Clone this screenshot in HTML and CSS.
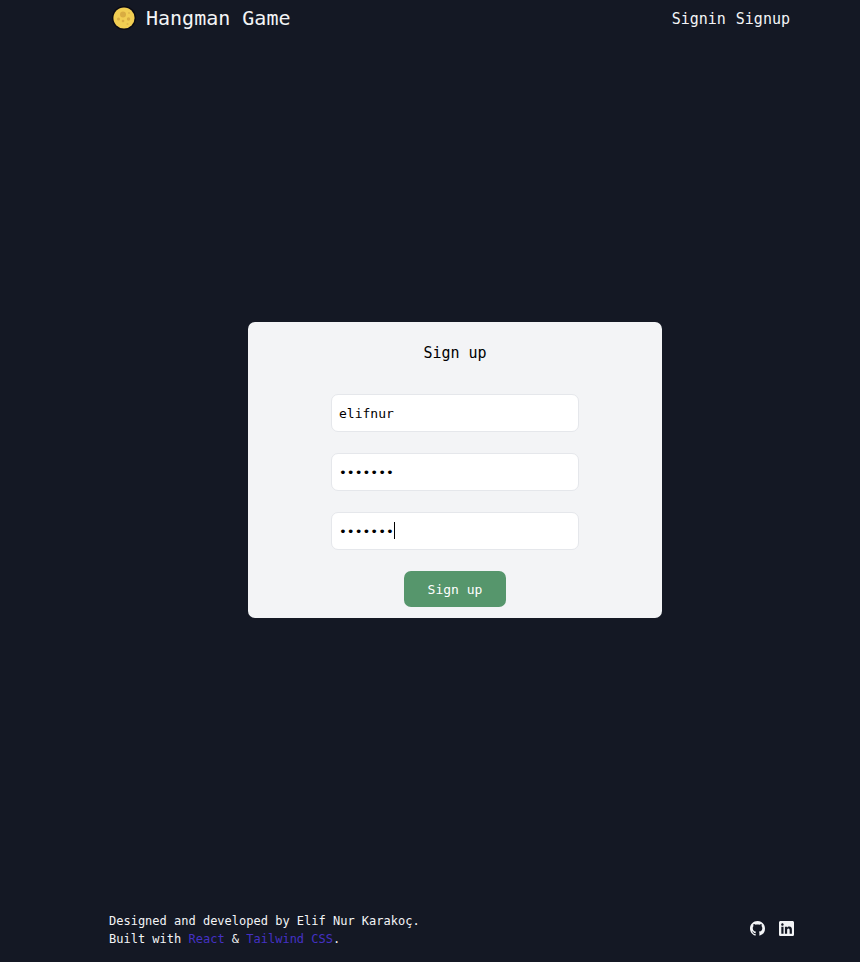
FILE: index.html
```html
<!DOCTYPE html>
<html lang="en">
<head>
  <meta charset="utf-8">
  <meta name="viewport" content="width=device-width, initial-scale=1">
  <title>Hangman Game</title>
  <link rel="stylesheet" href="styles.css">
</head>
<body>
  <header class="header">
    <a class="brand" href="#">
      <svg class="brand-icon" viewBox="0 0 24 24" aria-hidden="true">
        <circle cx="12" cy="12" r="12" fill="#0b0a12"/>
        <circle cx="12" cy="12" r="10.6" fill="#f1cd52"/>
        <circle cx="11" cy="8.500" r="3" fill="#d9ac42"/>
        <circle cx="16.500" cy="13" r="1.700" fill="#d9ac42"/>
        <circle cx="6.500" cy="13" r="1.500" fill="#d9ac42"/>
        <circle cx="11" cy="15" r="1.300" fill="#d9ac42"/>
        <circle cx="15.500" cy="18" r="1.100" fill="#dfb64a"/>
        <circle cx="17" cy="7" r="1" fill="#dfb64a"/>
      </svg>
      <span>Hangman Game</span>
    </a>
    <nav class="nav">
      <a href="#">Signin</a>
      <a href="#">Signup</a>
    </nav>
  </header>

  <main class="main">
    <form class="card">
      <h1 class="card-title">Sign up</h1>
      <input class="field" type="text" aria-label="Username" value="elifnur">
      <input class="field" type="password" aria-label="Password" value="elifnur">
      <div class="active-field">
        <input class="field" type="password" aria-label="Confirm password" value="elifnur" autofocus>
        <span class="caret"></span>
      </div>
      <button class="submit" type="submit">Sign up</button>
    </form>
  </main>

  <footer class="footer">
    <p class="credits">
      Designed and developed by Elif Nur Karakoç.<br>
      Built with <a href="#">React</a> &amp; <a href="#">Tailwind CSS</a>.
    </p>
    <div class="social">
      <a href="#" aria-label="GitHub">
        <svg viewBox="0 0 16 16" aria-hidden="true"><path fill="currentColor" d="M8 0C3.58 0 0 3.58 0 8c0 3.54 2.29 6.53 5.47 7.59.4.07.55-.17.55-.38 0-.19-.01-.82-.01-1.49-2.01.37-2.53-.49-2.69-.94-.09-.23-.48-.94-.82-1.13-.28-.15-.68-.52-.01-.53.63-.01 1.08.58 1.23.82.72 1.21 1.87.87 2.33.66.07-.52.28-.87.51-1.07-1.78-.2-3.64-.89-3.64-3.95 0-.87.31-1.59.82-2.15-.08-.2-.36-1.02.08-2.12 0 0 .67-.21 2.2.82.64-.18 1.32-.27 2-.27s1.36.09 2 .27c1.53-1.04 2.2-.82 2.2-.82.44 1.1.16 1.92.08 2.12.51.56.82 1.27.82 2.15 0 3.07-1.87 3.75-3.65 3.95.29.25.54.73.54 1.48 0 1.07-.01 1.93-.01 2.2 0 .21.15.46.55.38A8.01 8.01 0 0 0 16 8c0-4.42-3.58-8-8-8z"/></svg>
      </a>
      <a href="#" aria-label="LinkedIn">
        <svg viewBox="0 0 448 448" aria-hidden="true"><path fill="currentColor" d="M400 0H48C20 0 0 20 0 48v352c0 28 20 48 48 48h352c28 0 48-20 48-48V48c0-28-20-48-48-48zM135 384H69V170h66v214zM102 141c-21 0-38-17-38-38s17-39 38-39 38 17 38 39c0 21-17 38-38 38zM384 384h-66V280c0-25-1-57-35-57s-40 27-40 55v106h-66V170h64v29h1c9-17 31-35 63-35 67 0 80 44 80 102v118z"/></svg>
      </a>
    </div>
  </footer>
</body>
</html>
```

FILE: styles.css
```css
* {
  box-sizing: border-box;
}

body {
  display: flex;
  flex-direction: column;
  min-height: 100vh;
  margin: 0;
  background: #141824;
  color: #f3f4f6;
  font-family: Consolas, "DejaVu Sans Mono", monospace;
}

a {
  color: inherit;
  text-decoration: none;
}

svg {
  display: block;
}

.header {
  display: flex;
  align-items: center;
  justify-content: space-between;
  height: 36px;
  padding: 0 70px 0 112px;
}

.brand {
  display: flex;
  align-items: center;
  gap: 10px;
  font-size: 20px;
}

.brand-icon {
  width: 24px;
  height: 24px;
}

.nav {
  display: flex;
  gap: 10px;
  padding-top: 2px;
  font-size: 15px;
}

.main {
  display: flex;
  flex: 1;
  align-items: center;
  justify-content: center;
  padding: 0 16px 8px 66px;
}

.card {
  display: flex;
  flex-direction: column;
  align-items: center;
  gap: 21px;
  width: 100%;
  max-width: 414px;
  padding: 21px 16px 11px;
  border-radius: 7px;
  background: #f3f4f6;
  color: #000;
}

.card-title {
  margin: 0 0 10px;
  font-size: 15px;
  font-weight: 400;
  line-height: 20px;
}

.field {
  display: block;
  width: 248px;
  max-width: 100%;
  height: 38px;
  padding: 0 7px;
  border: 1px solid #e5e7eb;
  border-radius: 7px;
  outline: none;
  background: #fff;
  color: #000;
  caret-color: transparent;
  font: inherit;
  font-size: 13px;
}

.active-field {
  position: relative;
}

.caret {
  position: absolute;
  top: 10px;
  left: 63px;
  width: 1px;
  height: 17px;
  background: #000;
}

.submit {
  height: 36px;
  padding: 0 24px;
  border: 0;
  border-radius: 7px;
  background: #56966c;
  color: #fff;
  font: inherit;
  font-size: 13px;
}

.footer {
  display: flex;
  align-items: center;
  justify-content: space-between;
  padding: 0 66px 14px 109px;
}

.credits {
  margin: 0;
  font-size: 12px;
  line-height: 18px;
}

.credits a {
  color: #4431c4;
}

.social {
  display: flex;
  gap: 14px;
  padding-bottom: 4px;
}

.social svg {
  width: 15px;
  height: 15px;
}
```
